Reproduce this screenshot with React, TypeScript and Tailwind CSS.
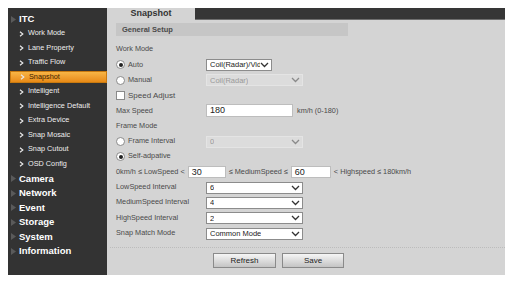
import React from 'react';

const subItems = ['Work Mode', 'Lane Property', 'Traffic Flow', 'Snapshot', 'Intelligent', 'Intelligence Default', 'Extra Device', 'Snap Mosaic', 'Snap Cutout', 'OSD Config'];
const topItems = ['Camera', 'Network', 'Event', 'Storage', 'System', 'Information'];

const Tri = () => (
  <svg width="5" height="7" viewBox="0 0 5 7" className="mr-[3px] shrink-0">
    <path d="M0 0 L5 3.5 L0 7 Z" fill="#5a5a5a" />
  </svg>
);

const Chevron = () => (
  <svg width="5" height="6" viewBox="0 0 5 6" className="shrink-0">
    <path d="M1 0.8 L3.8 3 L1 5.2" stroke="#e8e8e8" strokeWidth="1.2" fill="none" />
  </svg>
);

const Arrow = ({ light }: { light?: boolean }) => (
  <svg width="9" height="6" viewBox="0 0 9 6" className="shrink-0">
    <path d="M1 1 L4.5 4.5 L8 1" stroke={light ? '#8a8a8a' : '#333'} strokeWidth="1.3" fill="none" />
  </svg>
);

const Radio = ({ on }: { on?: boolean }) => (
  <span className="w-[9px] h-[9px] rounded-full border border-[#8a8a8a] bg-white flex items-center justify-center shrink-0">
    {on && <span className="w-[4px] h-[4px] rounded-full bg-[#222]" />}
  </span>
);

const Select = ({ value, w, disabled }: { value: string; w: string; disabled?: boolean }) => (
  <div
    className={`${w} h-[12px] flex items-center justify-between pl-[3px] pr-[2px] border ${
      disabled ? 'bg-[#dcdcdc] border-[#e4e4e4] text-[#999]' : 'bg-white border-[#8c8c8c] text-[#222]'
    } text-[7.5px] overflow-hidden`}
  >
    <span className="whitespace-nowrap overflow-hidden">{value}</span>
    <Arrow light={disabled} />
  </div>
);

const Row = ({ children }: { children: React.ReactNode }) => (
  <div className="h-[15.33px] flex items-center whitespace-nowrap">{children}</div>
);

const Label = ({ children }: { children: React.ReactNode }) => (
  <span className="w-[90px] shrink-0 text-[#4a4a4a]">{children}</span>
);

export default function App() {
  return (
    <div className="w-[520px] h-[288px] bg-white pt-[8px] pl-[8px] flex" style={{ fontFamily: '"Liberation Sans", Arial, sans-serif' }}>
      {/* Sidebar */}
      <div className="w-[99px] h-[267px] bg-[#333333] pt-[4px]">
        <div className="h-[14.5px] flex items-center pl-[3px] text-white font-bold text-[9.5px]">
          <Tri />
          ITC
        </div>
        {subItems.map((s) =>
          s === 'Snapshot' ? (
            <div key={s} className="h-[14.5px] flex items-center pl-[2px]">
              <div className="w-full h-[12px] flex items-center gap-[4px] pl-[9px] bg-gradient-to-b from-[#f7b545] to-[#e88a14] border border-[#c97a10] text-[7.3px] text-[#3a2200]">
                <Chevron />
                {s}
              </div>
            </div>
          ) : (
            <div key={s} className="h-[14.5px] flex items-center gap-[4px] pl-[11px] text-[7.3px] text-[#eeeeee]">
              <Chevron />
              {s}
            </div>
          )
        )}
        {topItems.map((t) => (
          <div key={t} className="h-[14.5px] flex items-center pl-[3px] text-white font-bold text-[9.5px]">
            <Tri />
            {t}
          </div>
        ))}
      </div>

      {/* Main */}
      <div className="w-[398px] h-[267px] bg-[#d4d4d4] flex flex-col">
        <div className="h-[12px] flex bg-[#363636] border-b border-[#6e6e6e]">
          <div className="w-[88px] h-[12px] bg-[#d4d4d4] flex items-center justify-center text-[9px] font-bold text-[#333]">
            Snapshot
          </div>
        </div>
        <div className="pl-[9px] pt-[3px]">
          <div className="w-[232px] h-[13px] bg-[#c6c6c6] flex items-center pl-[6px] text-[7.5px] font-bold text-[#4a4a4a]">
            General Setup
          </div>
          <div className="pt-[6px] text-[7.3px] text-[#4a4a4a]">
            <Row>Work Mode</Row>
            <Row>
              <span className="w-[90px] flex items-center gap-[3px]"><Radio on />Auto</span>
              <Select value="Coil(Radar)/Video" w="w-[66px]" />
            </Row>
            <Row>
              <span className="w-[90px] flex items-center gap-[3px]"><Radio />Manual</span>
              <Select value="Coil(Radar)" w="w-[97px]" disabled />
            </Row>
            <Row>
              <span className="flex items-center gap-[3px] text-[8px]">
                <span className="w-[9px] h-[9px] border border-[#8a8a8a] bg-white" />
                Speed Adjust
              </span>
            </Row>
            <Row>
              <Label>Max Speed</Label>
              <div className="w-[87px] h-[13px] bg-white border border-[#bdbdbd] flex items-center pl-[3px] text-[9px] text-[#222]">180</div>
              <span className="ml-[4px]">km/h (0-180)</span>
            </Row>
            <Row>Frame Mode</Row>
            <Row>
              <span className="w-[90px] flex items-center gap-[3px]"><Radio />Frame Interval</span>
              <Select value="0" w="w-[97px]" disabled />
            </Row>
            <Row>
              <span className="flex items-center gap-[3px]"><Radio on />Self-adpative</span>
            </Row>
            <Row>
              <span className="shrink-0">0km/h ≤ LowSpeed &lt;</span>
              <div className="ml-[3px] shrink-0 w-[38px] h-[12px] bg-white border border-[#bdbdbd] flex items-center pl-[3px] text-[9px] text-[#222]">30</div>
              <span className="ml-[3px] shrink-0">≤ MediumSpeed ≤</span>
              <div className="ml-[3px] shrink-0 w-[40px] h-[12px] bg-white border border-[#bdbdbd] flex items-center pl-[3px] text-[9px] text-[#222]">60</div>
              <span className="ml-[3px] shrink-0">&lt; Highspeed ≤ 180km/h</span>
            </Row>
            <Row>
              <Label>LowSpeed Interval</Label>
              <Select value="6" w="w-[97px]" />
            </Row>
            <Row>
              <Label>MediumSpeed Interval</Label>
              <Select value="4" w="w-[97px]" />
            </Row>
            <Row>
              <Label>HighSpeed Interval</Label>
              <Select value="2" w="w-[97px]" />
            </Row>
            <Row>
              <Label>Snap Match Mode</Label>
              <Select value="Common Mode" w="w-[97px]" />
            </Row>
          </div>
        </div>
        <div className="mt-[6px] ml-[3px] border-t border-dotted border-[#bcbcbc]" />
        <div className="flex gap-[6px] pt-[5px] pl-[106px]">
          <button className="w-[63px] h-[15px] border border-[#8a8a8a] bg-gradient-to-b from-[#f6f6f6] to-[#c4c4c4] text-[8px] text-[#222]">Refresh</button>
          <button className="w-[62px] h-[15px] border border-[#8a8a8a] bg-gradient-to-b from-[#f6f6f6] to-[#c4c4c4] text-[8px] text-[#222]">Save</button>
        </div>
      </div>
    </div>
  );
}
